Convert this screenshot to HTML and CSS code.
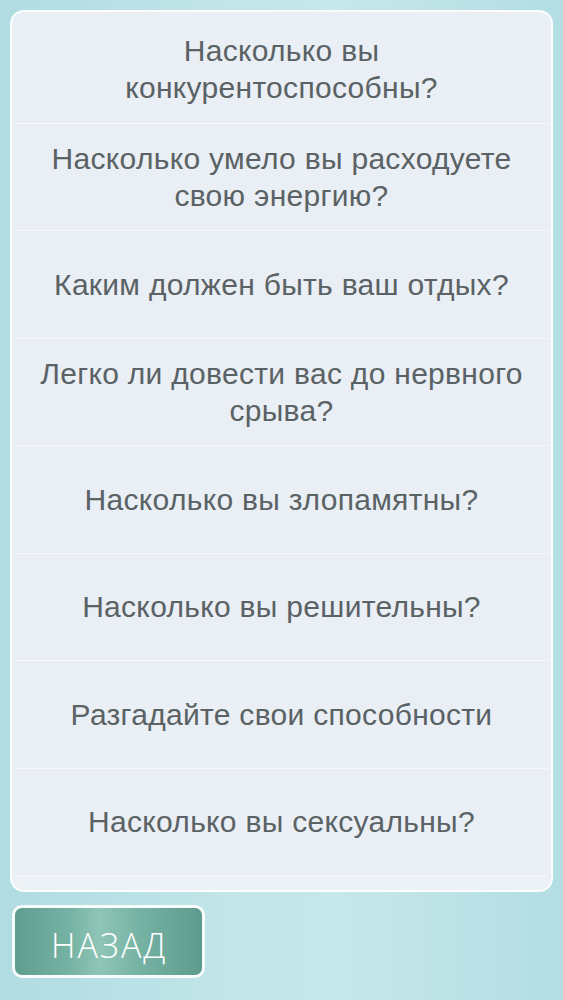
FILE: index.html
```html
<!DOCTYPE html>
<html lang="ru">
<head>
<meta charset="utf-8">
<link rel="stylesheet" href="styles.css">
</head>
<body>
<div class="screen">
  <div class="panel">
    <ul class="list">
      <li class="item">Насколько вы<br>конкурентоспособны?</li>
      <li class="item">Насколько умело вы расходуете<br>свою энергию?</li>
      <li class="item">Каким должен быть ваш отдых?</li>
      <li class="item">Легко ли довести вас до нервного<br>срыва?</li>
      <li class="item">Насколько вы злопамятны?</li>
      <li class="item">Насколько вы решительны?</li>
      <li class="item">Разгадайте свои способности</li>
      <li class="item">Насколько вы сексуальны?</li>
      <li class="item item-partial"></li>
    </ul>
  </div>
  <div class="footer">
    <button class="back-btn">НАЗАД</button>
  </div>
</div>
</body>
</html>
```
FILE: styles.css
```css
html, body {
  margin: 0;
  padding: 0;
}
body {
  width: 563px;
  height: 1000px;
  overflow: hidden;
  background: linear-gradient(to right, #b0dce2 0%, #c3e6ea 45%, #c6e7eb 60%, #b3dee3 100%);
  font-family: "Liberation Sans", Arial, sans-serif;
}
.screen {
  display: flex;
  flex-direction: column;
  padding: 10px 10px 0 10px;
  height: 1000px;
  box-sizing: border-box;
}
.panel {
  height: 882px;
  box-sizing: border-box;
  border: 2px solid #fbfdfd;
  border-radius: 14px;
  background: #e9eff4;
  overflow: hidden;
  padding: 4px 3px 0 3px;
}
.list {
  list-style: none;
  margin: 0;
  padding: 0;
}
.item {
  height: 107.5px;
  box-sizing: border-box;
  border-bottom: 1.5px solid #f6f9fb;
  display: flex;
  align-items: center;
  justify-content: center;
  text-align: center;
  color: #5a6265;
  font-size: 30px;
  letter-spacing: 0.3px;
  line-height: 37px;
}
.item-partial {
  height: 20px;
  background: #ecf2f5;
  border-bottom: none;
}
.footer {
  padding-top: 13px;
  padding-left: 2px;
}
.back-btn {
  width: 193px;
  height: 73px;
  box-sizing: border-box;
  border: 3px solid #f7fbfb;
  border-radius: 10px;
  background: linear-gradient(to right, #5f9d8f 0%, #77b3a4 30%, #8ec5b6 45%, #78b4a5 65%, #5e9b8d 100%);
  color: #ffffff;
  font-family: "Open Sans", sans-serif;
  font-weight: 300;
  font-size: 34px;
  letter-spacing: 2px;
  text-align: left;
  padding: 6px 0 0 36px;
  cursor: pointer;
}
```
